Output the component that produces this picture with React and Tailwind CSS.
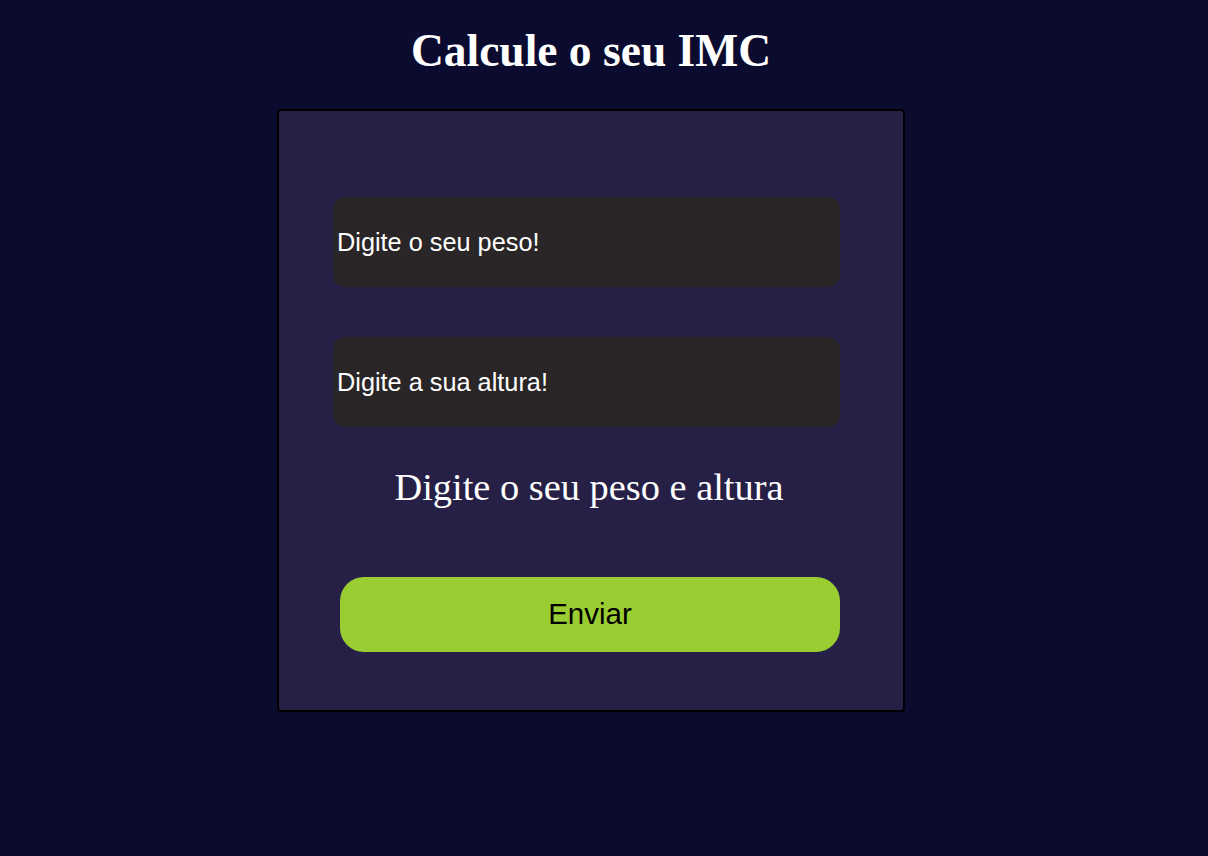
export default function App() {
  return (
    <div className="min-h-[856px] w-full bg-[#0b0b30] pr-[26px]">
      <div className="flex flex-col items-center">
        <h1 className="mt-[28px] font-['Liberation_Serif',serif] text-[45.5px] font-bold leading-[45px] text-white">
          Calcule o seu IMC
        </h1>

        <div className="mt-[36px] flex h-[603px] w-[628px] flex-col rounded border-2 border-black bg-[#272046] pt-[86px]">
          <input
            type="text"
            placeholder="Digite o seu peso!"
            className="ml-[54px] h-[90px] w-[507px] rounded-xl bg-[#2a2526] pl-[4px] font-['Liberation_Sans',sans-serif] text-[25.3px] text-white outline-none placeholder:text-white"
          />
          <input
            type="text"
            placeholder="Digite a sua altura!"
            className="ml-[54px] mt-[50px] h-[90px] w-[507px] rounded-xl bg-[#2a2526] pl-[4px] font-['Liberation_Sans',sans-serif] text-[25.3px] text-white outline-none placeholder:text-white"
          />

          <p className="mr-[4px] mt-[41px] text-center font-['Liberation_Serif',serif] text-[38.4px] leading-[38px] text-white">
            Digite o seu peso e altura
          </p>

          <button className="ml-[61px] mt-[71px] h-[75px] w-[500px] rounded-[24px] bg-[#9acd32] font-['Liberation_Sans',sans-serif] text-[29.5px] text-black">
            Enviar
          </button>
        </div>
      </div>
    </div>
  );
}
